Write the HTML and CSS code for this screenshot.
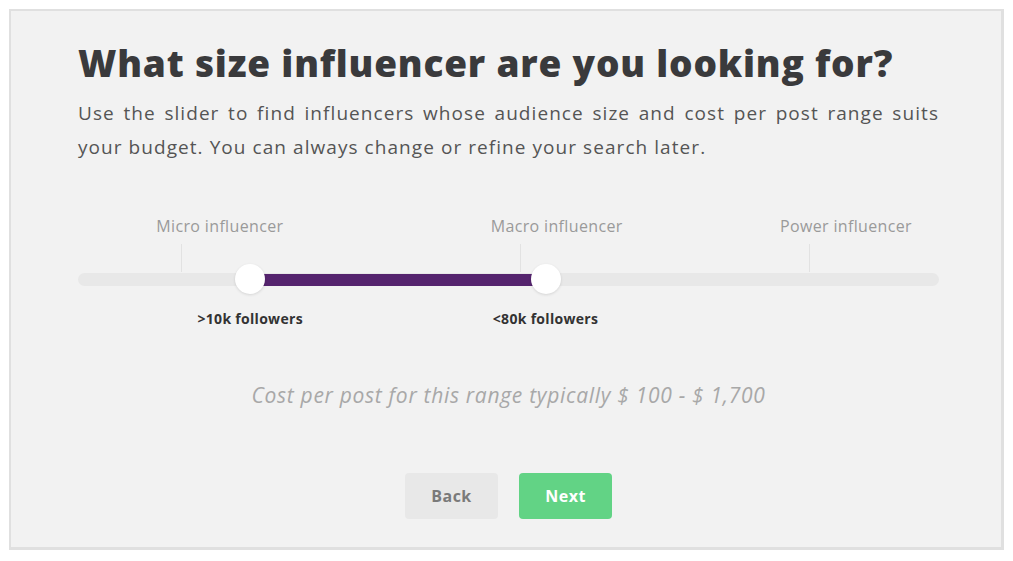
FILE: index.html
```html
<!DOCTYPE html>
<html>
<head>
<meta charset="utf-8">
<link rel="stylesheet" href="styles.css">
</head>
<body>
<div class="panel">
  <h1 class="title">What size influencer are you looking for?</h1>
  <p class="intro">Use the slider to find influencers whose audience size and cost per post range suits your budget. You can always change or refine your search later.</p>

  <div class="slider">
    <div class="labels">
      <span class="lbl" style="left:12%">Micro influencer</span>
      <span class="lbl lbl-shift" style="left:51.3%">Macro influencer</span>
      <span class="lbl lbl-shift" style="left:84.9%">Power influencer</span>
    </div>
    <div class="track-wrap">
      <span class="tick" style="left:12%"></span>
      <span class="tick" style="left:51.3%"></span>
      <span class="tick" style="left:84.9%"></span>
      <div class="track"></div>
      <div class="fill" style="left:20%;width:34.3%"></div>
      <span class="thumb" style="left:20%"></span>
      <span class="thumb" style="left:54.3%"></span>
    </div>
    <div class="values">
      <span class="val" style="left:20%">&gt;10k followers</span>
      <span class="val" style="left:54.3%">&lt;80k followers</span>
    </div>
  </div>

  <p class="cost">Cost per post for this range typically $ 100 - $ 1,700</p>

  <div class="actions">
    <button class="btn btn-back">Back</button>
    <button class="btn btn-next">Next</button>
  </div>
</div>
</body>
</html>
```

FILE: styles.css
```css
html, body {
  margin: 0;
  padding: 0;
  background: #ffffff;
}
body {
  font-family: "Open Sans", "Liberation Sans", sans-serif;
}
.panel {
  box-sizing: border-box;
  width: 995px;
  height: 541px;
  margin: 9px 0 0 9px;
  background: #f2f2f2;
  border: 2px solid #e0e0e0;
  border-right-width: 3px;
  border-bottom-width: 3px;
  padding: 29px 62px 0 67px;
}
.title {
  margin: 0;
  font-size: 37px;
  font-weight: 800;
  color: #3a3a3c;
  line-height: 46px;
  letter-spacing: 0.8px;
}
.intro {
  margin: 10px 0 0;
  font-size: 19px;
  line-height: 34px;
  color: #555;
  text-align: justify;
  letter-spacing: 1.06px;
}
.slider {
  margin-top: 51px;
}
.labels, .values {
  position: relative;
  height: 22px;
}
.lbl {
  position: absolute;
  top: 0;
  transform: translateX(-25px);
  font-size: 16px;
  line-height: 22px;
  color: #9a9a9a;
  white-space: nowrap;
  letter-spacing: 0.35px;
}
.lbl-shift {
  transform: translateX(-29px);
}
.track-wrap {
  position: relative;
  height: 71px;
}
.tick {
  position: absolute;
  top: 7px;
  width: 1px;
  height: 28px;
  background: #e2e2e2;
}
.track {
  position: absolute;
  left: 0;
  right: 0;
  top: 36px;
  height: 13px;
  border-radius: 7px;
  background: #e8e8e8;
}
.fill {
  position: absolute;
  top: 37px;
  height: 12px;
  background: #55246e;
}
.thumb {
  position: absolute;
  top: 27px;
  width: 30px;
  height: 30px;
  margin-left: -15px;
  border-radius: 50%;
  background: #fff;
  box-shadow: 0 1px 3px rgba(0,0,0,0.12);
}
.val {
  position: absolute;
  top: 0;
  transform: translateX(-50%);
  font-size: 14px;
  line-height: 22px;
  font-weight: 700;
  color: #333;
  white-space: nowrap;
  letter-spacing: 0.3px;
}
.cost {
  margin: 50px 0 0;
  text-align: center;
  font-style: italic;
  font-size: 21px;
  line-height: 30px;
  color: #a8a8a8;
  letter-spacing: 0.7px;
  padding-right: 0;
}
.actions {
  display: flex;
  justify-content: center;
  gap: 21px;
  margin-top: 63px;
}
.btn {
  width: 93px;
  height: 46px;
  border: none;
  border-radius: 4px;
  font-family: inherit;
  font-size: 16px;
  font-weight: 700;
  letter-spacing: 0.5px;
}
.btn-back {
  background: #e8e8e8;
  color: #7a7a7a;
}
.btn-next {
  background: #62d385;
  color: #fff;
}
```
